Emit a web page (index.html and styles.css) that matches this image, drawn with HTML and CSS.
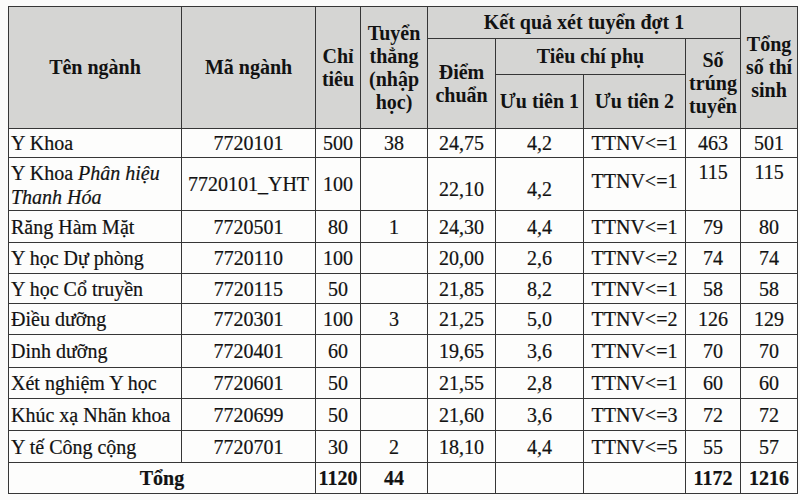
FILE: index.html
```html
<!DOCTYPE html>
<html lang="vi">
<head>
<meta charset="utf-8">
<link rel="stylesheet" href="styles.css">
</head>
<body>
<table class="grid">
  <colgroup>
    <col class="c-name"><col class="c-code"><col class="c-quota"><col class="c-direct"><col class="c-score"><col class="c-p1"><col class="c-p2"><col class="c-pass"><col class="c-total">
  </colgroup>
  <thead>
    <tr class="hr1">
      <th rowspan="3">Tên ngành</th>
      <th rowspan="3">Mã ngành</th>
      <th rowspan="3">Chỉ<br>tiêu</th>
      <th rowspan="3">Tuyển<br>thẳng<br>(nhập<br>học)</th>
      <th colspan="4">Kết quả xét tuyển đợt 1</th>
      <th rowspan="3">Tổng<br>số thí<br>sinh</th>
    </tr>
    <tr class="hr2">
      <th rowspan="2">Điểm<br>chuẩn</th>
      <th colspan="2">Tiêu chí phụ</th>
      <th rowspan="2">Số<br>trúng<br>tuyển</th>
    </tr>
    <tr class="hr3">
      <th>Ưu tiên 1</th>
      <th>Ưu tiên 2</th>
    </tr>
  </thead>
  <tbody>
    <tr class="r29"><td class="name">Y Khoa</td><td>7720101</td><td>500</td><td>38</td><td>24,75</td><td>4,2</td><td>TTNV&lt;=1</td><td>463</td><td>501</td></tr>
    <tr class="r53"><td class="name two">Y Khoa <i>Phân hiệu</i><br><i>Thanh Hóa</i></td><td>7720101_YHT</td><td>100</td><td></td><td class="low">22,10</td><td class="low">4,2</td><td class="high">TTNV&lt;=1</td><td class="top">115</td><td class="top">115</td></tr>
    <tr class="r32"><td class="name">Răng Hàm Mặt</td><td>7720501</td><td>80</td><td>1</td><td>24,30</td><td>4,4</td><td>TTNV&lt;=1</td><td>79</td><td>80</td></tr>
    <tr class="r31"><td class="name">Y học Dự phòng</td><td>7720110</td><td>100</td><td></td><td>20,00</td><td>2,6</td><td>TTNV&lt;=2</td><td>74</td><td>74</td></tr>
    <tr class="r30"><td class="name">Y học Cổ truyền</td><td>7720115</td><td>50</td><td></td><td>21,85</td><td>8,2</td><td>TTNV&lt;=1</td><td>58</td><td>58</td></tr>
    <tr class="r31"><td class="name">Điều dưỡng</td><td>7720301</td><td>100</td><td>3</td><td>21,25</td><td>5,0</td><td>TTNV&lt;=2</td><td>126</td><td>129</td></tr>
    <tr class="r33"><td class="name">Dinh dưỡng</td><td>7720401</td><td>60</td><td></td><td>19,65</td><td>3,6</td><td>TTNV&lt;=1</td><td>70</td><td>70</td></tr>
    <tr class="r31"><td class="name">Xét nghiệm Y học</td><td>7720601</td><td>50</td><td></td><td>21,55</td><td>2,8</td><td>TTNV&lt;=1</td><td>60</td><td>60</td></tr>
    <tr class="r32"><td class="name">Khúc xạ Nhãn khoa</td><td>7720699</td><td>50</td><td></td><td>21,60</td><td>3,6</td><td>TTNV&lt;=3</td><td>72</td><td>72</td></tr>
    <tr class="r32"><td class="name">Y tế Công cộng</td><td>7720701</td><td>30</td><td>2</td><td>18,10</td><td>4,4</td><td>TTNV&lt;=5</td><td>55</td><td>57</td></tr>
    <tr class="r31"><td colspan="2" class="b">Tổng</td><td class="b">1120</td><td class="b">44</td><td></td><td></td><td></td><td class="b">1172</td><td class="b">1216</td></tr>
  </tbody>
</table>
</body>
</html>
```
FILE: styles.css
```css
html, body {
  margin: 0;
  background: #fbfbfa;
}
body {
  padding: 6px 0 0 8px;
  font-family: "Liberation Serif", "Times New Roman", Times, serif;
  color: #121212;
}
.grid {
  border-collapse: collapse;
  table-layout: fixed;
  width: 789px;
  font-family: "Liberation Serif", "Times New Roman", Times, serif;
  font-size: 20px;
}
.c-name { width: 173px; }
.c-code { width: 134px; }
.c-quota { width: 45px; }
.c-direct { width: 67px; }
.c-score { width: 68px; }
.c-p1 { width: 88px; }
.c-p2 { width: 102px; }
.c-pass { width: 55px; }
.c-total { width: 57px; }

.grid th, .grid td {
  font-family: "Liberation Serif", "Times New Roman", Times, serif;
  border: 1px solid #363636;
  padding: 0 2px;
  text-align: center;
  vertical-align: middle;
  white-space: nowrap;
}
.grid th {
  background: #d5d5d3;
  font-weight: bold;
  line-height: 23px;
}
.grid td {
  background: #fdfdfc;
  line-height: 20px;
  -webkit-text-stroke: 0.2px #121212;
}
.grid td.name {
  text-align: left;
}
.grid td.two {
  line-height: 24px;
  padding-top: 1px;
}
.hr1 { height: 32px; }
.hr2 { height: 36px; }
.hr3 { height: 54px; }
.r29 { height: 29px; }
.r30 { height: 30px; }
.r31 { height: 31px; }
.r32 { height: 32px; }
.r33 { height: 33px; }
.r53 { height: 53px; }
.grid td.low { padding-top: 10px; }
.grid td.high { padding-bottom: 6px; }
.grid td.top { vertical-align: top; padding-top: 4px; }
.grid td.b { font-weight: bold; }
```
